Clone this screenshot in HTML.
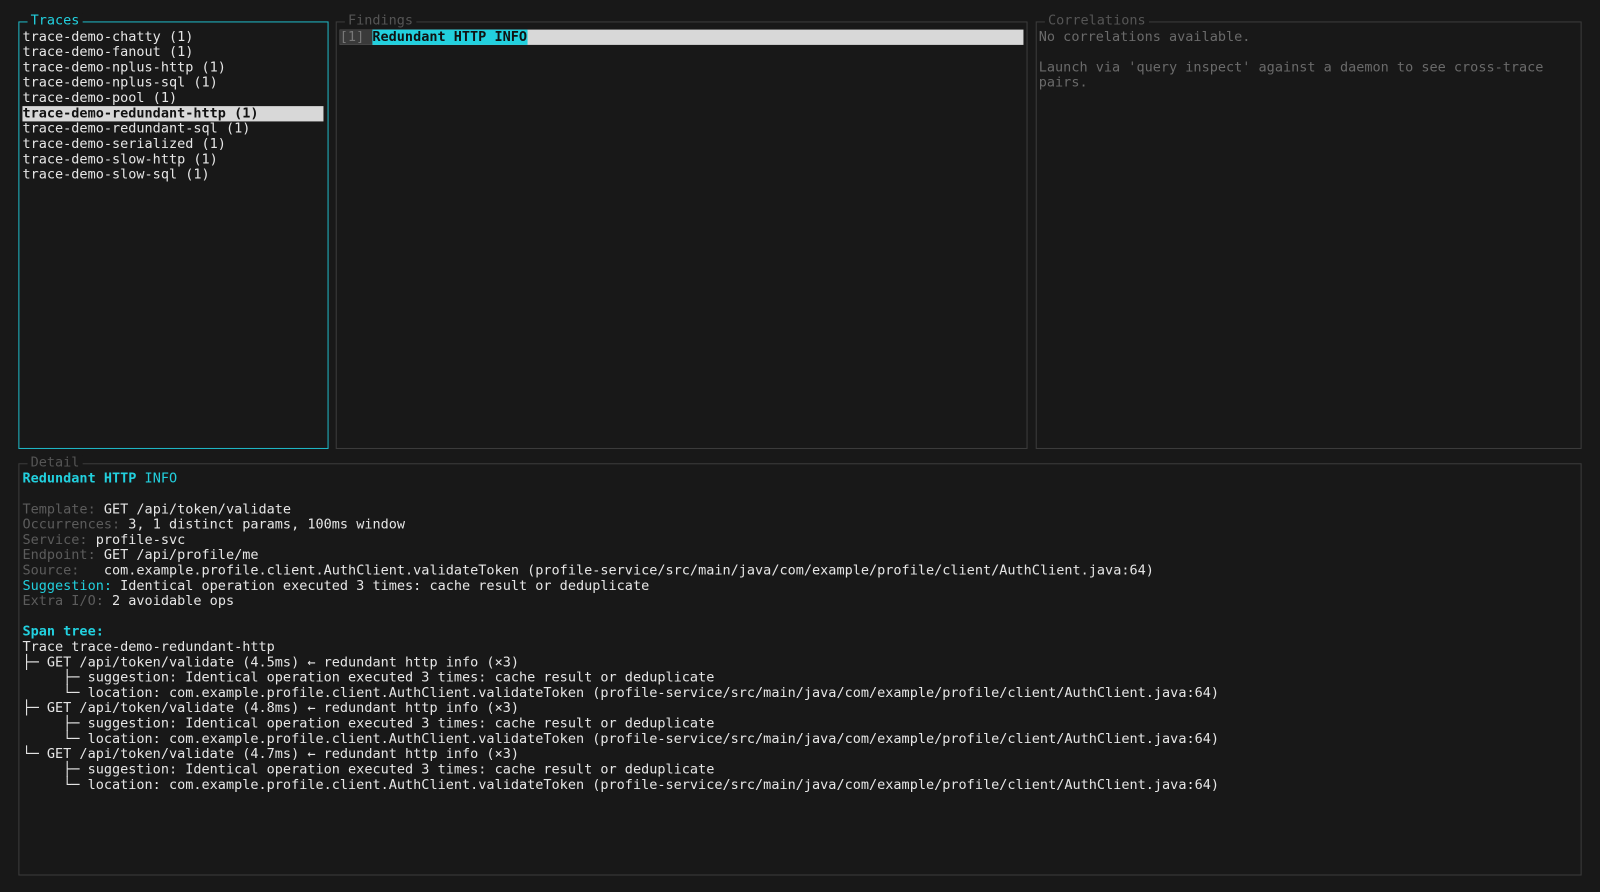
<!DOCTYPE html>
<html><head><style>
html,body{margin:0;padding:0;background:#181818;width:1600px;height:892px;overflow:hidden}
#w{position:absolute;left:0;top:0;width:1568px;height:874px;transform:scale(1.0204);transform-origin:0 0}
body{font-family:"DejaVu Sans Mono","Liberation Mono",monospace;font-size:13.25px;color:#e6e6e6}
.box{position:absolute;border:1px solid #3c3c3c;box-sizing:border-box}
.t{position:absolute;top:-9px;left:8px;background:#181818;padding:0 3px;line-height:16px;color:#555;white-space:pre}
.l{position:absolute;white-space:pre;line-height:15px;height:15px}
.g{color:#5c5c5c}
.c{color:#22d0de}
.b{font-weight:bold}
</style></head><body><div id="w">
<div class="box" style="left:18px;top:21px;width:304px;height:419px;border-color:#1fb8c6"><span class="t c" style="color:#22d0de">Traces</span></div>
<div class="box" style="left:329px;top:21px;width:678px;height:419px"><span class="t">Findings</span></div>
<div class="box" style="left:1015px;top:21px;width:535px;height:419px"><span class="t">Correlations</span></div>
<div class="box" style="left:18px;top:454px;width:1532px;height:404px"><span class="t">Detail</span></div>

<div class="l" style="left:22px;top:29px">trace-demo-chatty (1)</div>
<div class="l" style="left:22px;top:44px">trace-demo-fanout (1)</div>
<div class="l" style="left:22px;top:59px">trace-demo-nplus-http (1)</div>
<div class="l" style="left:22px;top:74px">trace-demo-nplus-sql (1)</div>
<div class="l" style="left:22px;top:89px">trace-demo-pool (1)</div>
<div class="l b" style="left:22px;top:104px;width:295px;background:#d8d8d8;color:#111">trace-demo-redundant-http (1)</div>
<div class="l" style="left:22px;top:119px">trace-demo-redundant-sql (1)</div>
<div class="l" style="left:22px;top:134px">trace-demo-serialized (1)</div>
<div class="l" style="left:22px;top:149px">trace-demo-slow-http (1)</div>
<div class="l" style="left:22px;top:164px">trace-demo-slow-sql (1)</div>

<div class="l" style="left:333px;top:29px;width:670px;background:#d8d8d8"><span style="background:#3a3a3a;color:#777">[1] </span><span class="b" style="background:#22d0de;color:#111">Redundant HTTP INFO</span></div>

<div class="l" style="left:1018px;top:29px;color:#6a6a6a">No correlations available.</div>
<div class="l" style="left:1018px;top:59px;color:#6a6a6a">Launch via 'query inspect' against a daemon to see cross-trace</div>
<div class="l" style="left:1018px;top:74px;color:#6a6a6a">pairs.</div>

<div class="l" style="left:22px;top:462px"><span class="c b">Redundant HTTP</span> <span class="c">INFO</span></div>
<div class="l" style="left:22px;top:492px"><span class="g">Template:</span> GET /api/token/validate</div>
<div class="l" style="left:22px;top:507px"><span class="g">Occurrences:</span> 3, 1 distinct params, 100ms window</div>
<div class="l" style="left:22px;top:522px"><span class="g">Service:</span> profile-svc</div>
<div class="l" style="left:22px;top:537px"><span class="g">Endpoint:</span> GET /api/profile/me</div>
<div class="l" style="left:22px;top:552px"><span class="g">Source:</span>   com.example.profile.client.AuthClient.validateToken (profile-service/src/main/java/com/example/profile/client/AuthClient.java:64)</div>
<div class="l" style="left:22px;top:567px"><span class="c">Suggestion:</span> Identical operation executed 3 times: cache result or deduplicate</div>
<div class="l" style="left:22px;top:582px"><span class="g">Extra I/O:</span> 2 avoidable ops</div>
<div class="l" style="left:22px;top:612px"><span class="c b">Span tree:</span></div>
<div class="l" style="left:22px;top:627px">Trace trace-demo-redundant-http</div>
<div class="l" style="left:22px;top:642px">├─ GET /api/token/validate (4.5ms) ← redundant http info (×3)</div>
<div class="l" style="left:22px;top:657px">     ├─ suggestion: Identical operation executed 3 times: cache result or deduplicate</div>
<div class="l" style="left:22px;top:672px">     └─ location: com.example.profile.client.AuthClient.validateToken (profile-service/src/main/java/com/example/profile/client/AuthClient.java:64)</div>
<div class="l" style="left:22px;top:687px">├─ GET /api/token/validate (4.8ms) ← redundant http info (×3)</div>
<div class="l" style="left:22px;top:702px">     ├─ suggestion: Identical operation executed 3 times: cache result or deduplicate</div>
<div class="l" style="left:22px;top:717px">     └─ location: com.example.profile.client.AuthClient.validateToken (profile-service/src/main/java/com/example/profile/client/AuthClient.java:64)</div>
<div class="l" style="left:22px;top:732px">└─ GET /api/token/validate (4.7ms) ← redundant http info (×3)</div>
<div class="l" style="left:22px;top:747px">     ├─ suggestion: Identical operation executed 3 times: cache result or deduplicate</div>
<div class="l" style="left:22px;top:762px">     └─ location: com.example.profile.client.AuthClient.validateToken (profile-service/src/main/java/com/example/profile/client/AuthClient.java:64)</div>
</div></body></html>
